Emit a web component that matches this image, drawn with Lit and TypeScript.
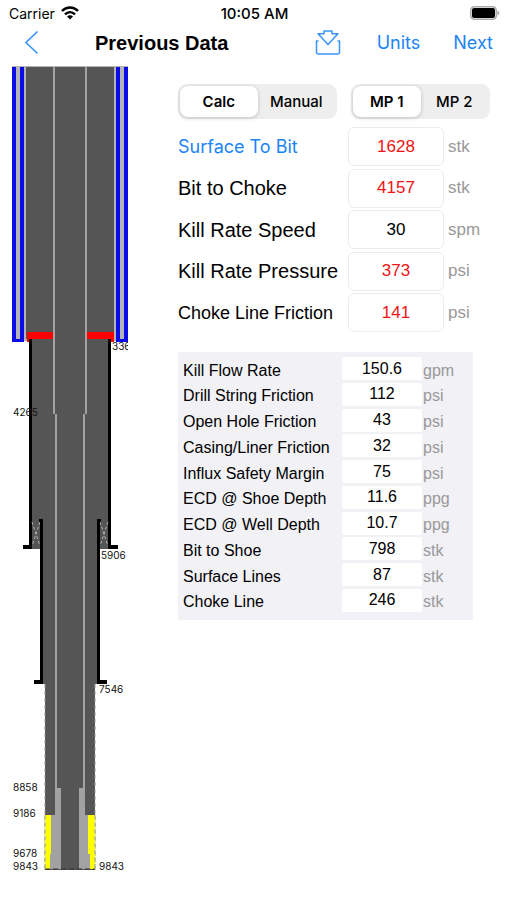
import { LitElement, html, svg, css } from "lit";
import { customElement, property, state } from "lit/decorators.js";
import { classMap } from "lit/directives/class-map.js";

interface Field {
  id: string;
  label: string;
  value: string;
  unit: string;
  tone?: "computed";
  look?: "link" | "long";
}

const RATES: Field[] = [
  { id: "surface-to-bit", label: "Surface To Bit", value: "1628", unit: "stk", tone: "computed", look: "link" },
  { id: "bit-to-choke", label: "Bit to Choke", value: "4157", unit: "stk", tone: "computed" },
  { id: "kill-speed", label: "Kill Rate Speed", value: "30", unit: "spm" },
  { id: "kill-pressure", label: "Kill Rate Pressure", value: "373", unit: "psi", tone: "computed" },
  { id: "choke-friction", label: "Choke Line Friction", value: "141", unit: "psi", tone: "computed", look: "long" },
];

const DETAILS: Field[] = [
  { id: "flow-rate", label: "Kill Flow Rate", value: "150.6", unit: "gpm" },
  { id: "string-friction", label: "Drill String Friction", value: "112", unit: "psi" },
  { id: "hole-friction", label: "Open Hole Friction", value: "43", unit: "psi" },
  { id: "casing-friction", label: "Casing/Liner Friction", value: "32", unit: "psi" },
  { id: "influx-margin", label: "Influx Safety Margin", value: "75", unit: "psi" },
  { id: "ecd-shoe", label: "ECD @ Shoe Depth", value: "11.6", unit: "ppg" },
  { id: "ecd-well", label: "ECD @ Well Depth", value: "10.7", unit: "ppg" },
  { id: "bit-to-shoe", label: "Bit to Shoe", value: "798", unit: "stk" },
  { id: "surface-lines", label: "Surface Lines", value: "87", unit: "stk" },
  { id: "choke-line", label: "Choke Line", value: "246", unit: "stk" },
];

@customElement("well-schematic")
class WellSchematic extends LitElement {
  static styles = css`
    :host { display: block; }
    .well { display: block; width: 100%; height: auto; }
    .rock { fill: #555; }
    .steel { fill: #a2a2a2; }
    .pale { fill: #b4b4b4; }
    .riser { fill: #0b0be6; }
    .ram { fill: #f00; }
    .casing { fill: #000; }
    .mud { fill: #ff0; }
    .open { stroke: #999; stroke-width: 1; stroke-dasharray: 4 3; fill: none; }
    .floor { stroke: #333; stroke-width: 1; stroke-dasharray: 5 3; fill: none; }
    .seal { stroke: #b0b0b0; stroke-width: 1; stroke-dasharray: 3 2; fill: none; }
    .depth { font: 10px Inter, "Liberation Sans", sans-serif; fill: #111; }
  `;

  render() {
    return html`
      <svg class="well" viewBox="0 0 160 810" role="img" aria-label="Well schematic">
        <defs>
          <clipPath id="edge"><rect x="0" y="0" width="128" height="810" /></clipPath>
        </defs>
        ${this.riser()} ${this.casings()} ${this.string()} ${this.depths()}
      </svg>
    `;
  }

  private riser() {
    return svg`
      <rect class="pale" x="12" y="0" width="116" height="275" />
      <rect class="riser" x="12" y="1" width="4" height="275" />
      <rect class="riser" x="20" y="1" width="4" height="275" />
      <rect class="riser" x="12" y="273" width="12" height="3" />
      <rect class="riser" x="116" y="1" width="4" height="275" />
      <rect class="riser" x="124" y="1" width="4" height="275" />
      <rect class="riser" x="116" y="273" width="12" height="3" />
      <rect class="rock" x="26" y="1" width="88" height="272" />
      <rect class="ram" x="27" y="266" width="87" height="10" />
    `;
  }

  private casings() {
    return svg`
      <rect class="casing" x="29" y="273" width="82" height="210" />
      <rect class="rock" x="32" y="273" width="76" height="210" />
      <rect class="casing" x="23" y="479" width="9" height="4" />
      <rect class="casing" x="108" y="479" width="10" height="4" />
      <path class="seal" d="M32 456 L40 480 M40 456 L32 480 M100 456 L108 480 M108 456 L100 480" />
      <path class="casing" d="M39 453 H43 V618 H34 V614 H40 V456 H39 Z" />
      <path class="casing" d="M101 453 H97 V618 H107 V614 H100 V456 H101 Z" />
      <rect class="rock" x="43" y="453" width="54" height="165" />
      <rect class="rock" x="45" y="618" width="50" height="186" />
      <path class="open" d="M45 618 V804 M95 618 V804" />
    `;
  }

  private string() {
    return svg`
      <rect class="rock" x="53" y="200" width="34" height="150" />
      <rect class="steel" x="53" y="1" width="2" height="347" />
      <rect class="steel" x="85" y="1" width="2" height="347" />
      <rect class="steel" x="55" y="348" width="2" height="374" />
      <rect class="steel" x="83" y="348" width="2" height="374" />
      <path class="mud" d="M45 749 H54 V803 H45 Z M86 749 H95 V803 H86 Z" />
      <path class="steel" d="M55 722 H61 V803 H50 V788 H51 V749 H55 Z" />
      <path class="steel" d="M85 722 H79 V803 H90 V788 H88 V749 H85 Z" />
      <path class="open" d="M45 749 V803 M95 749 V803" />
      <path class="floor" d="M45 803 H95" />
    `;
  }

  private depths() {
    const marks: [number, number, string][] = [
      [13, 350, "4265"],
      [101, 493, "5906"],
      [99, 627, "7546"],
      [13, 725, "8858"],
      [13, 751, "9186"],
      [13, 791, "9678"],
      [13, 804, "9843"],
      [99, 804, "9843"],
    ];
    return svg`
      <g clip-path="url(#edge)"><text class="depth" x="112" y="284">3369</text></g>
      ${marks.map(([x, y, t]) => svg`<text class="depth" x=${x} y=${y}>${t}</text>`)}
    `;
  }
}

@customElement("segment-switch")
class SegmentSwitch extends LitElement {
  @property({ type: Array }) options: string[] = [];
  @state() private chosen = 0;

  static styles = css`
    :host { display: flex; box-sizing: border-box; height: 35px; padding: 2px; border-radius: 9px; background: #eeeeef; }
    .segment {
      flex: 1 1 0; min-width: 0; padding: 0; border: 0; border-radius: 8px; background: none;
      font: 500 15px Inter, "Liberation Sans", sans-serif; color: #000; white-space: nowrap;
    }
    .on { background: #fff; box-shadow: 0 1px 4px rgba(0, 0, 0, 0.2); font-weight: 600; }
  `;

  render() {
    return this.options.map(
      (name, i) => html`<button
        class=${classMap({ segment: true, on: i === this.chosen })}
        aria-pressed=${i === this.chosen}
        @click=${() => (this.chosen = i)}
      >${name}</button>`
    );
  }
}

@customElement("app-root")
class AppRoot extends LitElement {
  static styles = css`
    :host {
      display: block; min-height: 100vh; background: #fff; color: #000;
      font-family: "Liberation Sans", Arial, sans-serif;
    }
    .status {
      display: grid; grid-template-columns: 1fr auto 1fr; align-items: center;
      height: 26px; padding: 0 7px 0 9px;
      font: 500 15px Inter, "Liberation Sans", sans-serif;
    }
    .carrier { display: flex; align-items: center; gap: 6px; font-weight: 400; font-size: 14px; }
    .battery { justify-self: end; display: block; }
    .nav { display: flex; align-items: center; height: 34px; padding: 0 14px 6px 24px; }
    .icon { display: block; padding: 0; border: 0; background: none; }
    .title { flex: 1; margin: 0 0 0 56px; font-size: 20px; line-height: 24px; font-weight: 700; white-space: nowrap; }
    .actions { display: flex; align-items: center; }
    .action { font: 18px/24px Inter, "Liberation Sans", sans-serif; color: #1a84f5; text-decoration: none; }
    .units { margin: 0 33px 0 36px; }
    .glyph { display: block; }
    .main { display: grid; grid-template-columns: 160px minmax(0, 1fr); column-gap: 18px; padding: 0 17px 24px 0; }
    .panel { padding-top: 18px; }
    .switches { display: grid; grid-template-columns: 159fr 139fr; column-gap: 14px; }
    .rates {
      display: flex; flex-direction: column; justify-content: space-between;
      min-height: 205px; margin-top: 8px;
    }
    .rate { display: grid; grid-template-columns: 170px minmax(0, 96px) 1fr; align-items: center; }
    .name { font-size: 20px; line-height: 24px; white-space: nowrap; }
    .link { font: 18px/24px Inter, "Liberation Sans", sans-serif; color: #1a84f5; }
    .long { font-size: 18px; }
    .entry {
      box-sizing: border-box; width: 100%; height: 39px; padding: 0; border: 1px solid #ececec; border-radius: 6px;
      background: #fff; font: 17px "Liberation Sans", Arial, sans-serif; color: #000; text-align: center;
    }
    .computed { color: #f01414; }
    .unit { padding-left: 4px; font-size: 17px; color: #999; }
    .details {
      display: flex; flex-direction: column; justify-content: space-between;
      box-sizing: border-box; min-height: 268px; margin: 20px 17px 0 0; padding: 5px 0 8px 5px; background: #f1f1f6;
    }
    .detail { display: grid; grid-template-columns: 159px minmax(0, 80px) 1fr; align-items: center; font-size: 16px; line-height: 18px; }
    .caption { padding-top: 4px; white-space: nowrap; }
    .figure {
      box-sizing: border-box; width: 100%; height: 23px; padding: 0; border: 0; border-radius: 2px;
      background: #fff; font: 16px "Liberation Sans", Arial, sans-serif; color: #000; text-align: center;
    }
    .measure { padding: 4px 0 0 1px; color: #999; }
  `;

  render() {
    return html`
      <div class="status">
        <span class="carrier">
          Carrier
          <svg class="glyph" width="18" height="14" viewBox="0 0 18 14" aria-label="Wi-Fi">
            <g fill="none" stroke="#000" stroke-width="2.5">
              <path d="M1 5 C5.5 0.4 12.5 0.4 17 5" />
              <path d="M4 8.4 C7 5.4 11 5.4 14 8.4" />
            </g>
            <path d="M9 13.6 L6 10.5 C7.6 8.9 10.4 8.9 12 10.5 Z" />
          </svg>
        </span>
        <span>10:05 AM</span>
        <svg class="battery" width="30" height="14" viewBox="0 0 30 14" aria-label="Battery">
          <rect x="0.75" y="0.75" width="25.5" height="12.5" rx="3.5" fill="#fff" stroke="#aaa" stroke-width="1.5" />
          <rect x="2" y="2" width="23" height="10" rx="2" />
          <path d="M27.5 4.5 C30 5.2 30 8.8 27.5 9.5 Z" fill="#aaa" />
        </svg>
      </div>

      <header class="nav">
        <button class="icon" aria-label="Back">
          <svg class="glyph" width="15" height="24" viewBox="0 0 15 24">
            <path d="M13.5 0.5 L2 11.5 L13.5 22.5" fill="none" stroke="#3a94f7" stroke-width="1.6" />
          </svg>
        </button>
        <h1 class="title">Previous Data</h1>
        <div class="actions">
          <button class="icon" aria-label="Import">
            <svg class="glyph" width="26" height="26" viewBox="0 0 26 26">
              <g fill="none" stroke="#3a94f7" stroke-width="1.5" stroke-linejoin="round">
                <path d="M3.5 11 H1.5 V22.3 Q1.5 24 3.2 24 H22.8 Q24.5 24 24.5 22.3 V11 H22.5" />
                <path d="M9 1 H17 V3.8 H23 L13 14.5 L3 3.8 H9 Z" />
              </g>
            </svg>
          </button>
          <a class="action units" href="#units">Units</a>
          <a class="action" href="#next">Next</a>
        </div>
      </header>

      <main class="main">
        <well-schematic></well-schematic>
        <section class="panel">
          <div class="switches">
            <segment-switch .options=${["Calc", "Manual"]}></segment-switch>
            <segment-switch .options=${["MP 1", "MP 2"]}></segment-switch>
          </div>
          <div class="rates">
            ${RATES.map(
              (f) => html`<div class="rate">
                <label for=${f.id} class=${classMap({ name: true, link: f.look === "link", long: f.look === "long" })}>${f.label}</label>
                <input id=${f.id} class=${classMap({ entry: true, computed: f.tone === "computed" })} .value=${f.value} />
                <span class="unit">${f.unit}</span>
              </div>`
            )}
          </div>
          <div class="details">
            ${DETAILS.map(
              (f) => html`<div class="detail">
                <label for=${f.id} class="caption">${f.label}</label>
                <input id=${f.id} class="figure" .value=${f.value} />
                <span class="measure">${f.unit}</span>
              </div>`
            )}
          </div>
        </section>
      </main>
    `;
  }
}
